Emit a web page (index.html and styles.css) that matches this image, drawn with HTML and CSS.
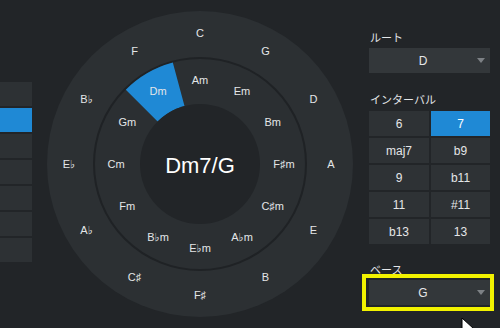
FILE: index.html
```html
<!DOCTYPE html>
<html lang="ja">

<head>
  <meta charset="UTF-8">
  <meta name="viewport" content="width=device-width, initial-scale=1.0">
  <title>コードホイール</title>
  <link rel="stylesheet" href="styles.css">
</head>

<body>

  <div class="app">
    <div class="side-list">
      <div class="side-row"></div>
      <div class="side-row active"></div>
      <div class="side-row"></div>
      <div class="side-row"></div>
      <div class="side-row"></div>
      <div class="side-row"></div>
      <div class="side-row"></div>
    </div>

    <div class="wheel">
      <svg width="306" height="306" viewBox="0 0 306 306">
        <g transform="translate(153 153)">
          <circle class="ring-outer" r="153"></circle>
          <circle class="ring-mid" r="106"></circle>
          <path class="ring-sel" d="M -74.2 -74.2 A 105 105 0 0 1 -27.2 -101.4 L -15.5 -58 A 60 60 0 0 0 -42.4 -42.4 Z"></path>
          <circle class="ring-inner" r="60"></circle>

          <!-- メジャー -->
          <text class="key" x="0" y="-131">C</text>
          <text class="key" x="65.5" y="-113.4">G</text>
          <text class="key" x="113.4" y="-65.5">D</text>
          <text class="key" x="131" y="0">A</text>
          <text class="key" x="113.4" y="65.5">E</text>
          <text class="key" x="65.5" y="113.4">B</text>
          <text class="key" x="0" y="131">F♯</text>
          <text class="key" x="-65.5" y="113.4">C♯</text>
          <text class="key" x="-113.4" y="65.5">A♭</text>
          <text class="key" x="-131" y="0">E♭</text>
          <text class="key" x="-113.4" y="-65.5">B♭</text>
          <text class="key" x="-65.5" y="-113.4">F</text>

          <!-- マイナー -->
          <text class="key" x="0" y="-84">Am</text>
          <text class="key" x="42" y="-72.7">Em</text>
          <text class="key" x="72.7" y="-42">Bm</text>
          <text class="key" x="84" y="0">F♯m</text>
          <text class="key" x="72.7" y="42">C♯m</text>
          <text class="key" x="42" y="72.7">A♭m</text>
          <text class="key" x="0" y="84">E♭m</text>
          <text class="key" x="-42" y="72.7">B♭m</text>
          <text class="key" x="-72.7" y="42">Fm</text>
          <text class="key" x="-84" y="0">Cm</text>
          <text class="key" x="-72.7" y="-42">Gm</text>
          <text class="key" x="-42" y="-72.7">Dm</text>

          <text class="chord" x="0" y="1">Dm7/G</text>
        </g>
      </svg>
    </div>

    <div class="panel">
      <div class="label">ルート</div>
      <div class="select">
        <span class="select-value">D</span>
        <span class="select-arrow"></span>
      </div>

      <div class="label label-gap">インターバル</div>
      <div class="intervals">
        <button class="iv">6</button>
        <button class="iv active">7</button>
        <button class="iv">maj7</button>
        <button class="iv">b9</button>
        <button class="iv">9</button>
        <button class="iv">b11</button>
        <button class="iv">11</button>
        <button class="iv">#11</button>
        <button class="iv">b13</button>
        <button class="iv">13</button>
      </div>

      <div class="label label-gap2">ベース</div>
      <div class="select highlight">
        <span class="select-value">G</span>
        <span class="select-arrow"></span>
      </div>
    </div>
  </div>

  <svg class="cursor" width="14" height="20" viewBox="0 0 14 20">
    <path d="M1 1 L1 17 L5 13 L8 19 L10.5 18 L7.5 12 L13 12 Z" fill="#ffffff" stroke="#000000" stroke-width="1"></path>
  </svg>

</body>

</html>
```

FILE: styles.css
```css
body {
  margin: 0;
  width: 500px;
  height: 328px;
  overflow: hidden;
  background-color: #222528;
  font-family: "Liberation Sans", "Noto Sans CJK JP", sans-serif;
  color: #e4e6e8;
  position: relative;
}

.app {
  display: flex;
  height: 328px;
}

.side-list {
  width: 32px;
  padding-top: 82px;
  display: flex;
  flex-direction: column;
  gap: 2px;
}

.side-row {
  height: 24px;
  background-color: #2d3134;
}

.side-row.active {
  background-color: #1f89d5;
}

.wheel {
  margin-left: 15px;
  margin-top: 11px;
  width: 306px;
  height: 306px;
}

.wheel svg {
  display: block;
}

.ring-outer {
  fill: #2c3033;
}

.ring-mid {
  fill: #2b2f32;
  stroke: #1f2225;
  stroke-width: 2;
}

.ring-sel {
  fill: #1f89d5;
}

.ring-inner {
  fill: #222528;
}

.key {
  fill: #e4e6e8;
  font-family: "Liberation Sans", "DejaVu Sans", sans-serif;
  font-size: 11px;
  text-anchor: middle;
  dominant-baseline: central;
}

.chord {
  fill: #ffffff;
  font-size: 22px;
  text-anchor: middle;
  dominant-baseline: central;
}

.panel {
  margin-left: 16px;
  width: 121px;
  padding-top: 30px;
}

.label {
  font-family: "Noto Sans CJK JP", sans-serif;
  font-size: 11px;
  line-height: 14px;
  height: 14px;
  margin-bottom: 4px;
  padding-left: 1px;
}

.label-gap {
  margin-top: 19px;
  margin-bottom: 5px;
}

.label-gap2 {
  margin-top: 18px;
  margin-bottom: 4px;
}

.select {
  height: 25px;
  background-color: #33373a;
  display: flex;
  align-items: center;
  font-size: 12px;
  position: relative;
}

.select-value {
  flex: 1;
  text-align: center;
}

.select-arrow {
  width: 0;
  height: 0;
  border-left: 4px solid transparent;
  border-right: 4px solid transparent;
  border-top: 5px solid #7d8185;
  margin-right: 5px;
}

.highlight::after {
  content: "";
  position: absolute;
  top: -6px;
  bottom: -6px;
  left: -7px;
  right: -4px;
  border: 4px solid #f2f200;
}

.intervals {
  display: grid;
  grid-template-columns: 60px 59px;
  grid-auto-rows: 25px;
  gap: 2px;
}

.iv {
  border: none;
  padding: 0;
  background-color: #2e3235;
  color: #e4e6e8;
  font-family: "Liberation Sans", sans-serif;
  font-size: 12px;
}

.iv.active {
  background-color: #1f89d5;
  color: #ffffff;
}

.cursor {
  position: absolute;
  left: 461px;
  top: 317px;
}
```
